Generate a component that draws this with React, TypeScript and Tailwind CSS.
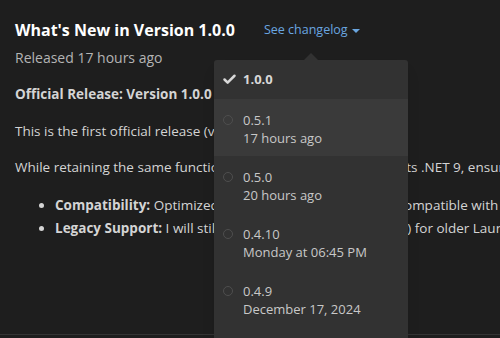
import { Check } from "lucide-react";

const versions = [
  { v: "0.5.1", when: "17 hours ago", hover: true },
  { v: "0.5.0", when: "20 hours ago" },
  { v: "0.4.10", when: "Monday at 06:45 PM" },
  { v: "0.4.9", when: "December 17, 2024" },
];

export default function App() {
  return (
    <div
      className="relative h-[338px] w-[500px] overflow-hidden bg-[#1e1e1e] text-[#d4d4d4]"
      style={{ fontFamily: '"Open Sans", "Noto Sans", sans-serif' }}
    >
      <div className="h-[335px] border-b border-[#343434] px-[15px] pt-[19px]">
        <div className="flex h-[22px] items-center">
          <h1 className="text-[16px] font-bold text-white">What's New in Version 1.0.0</h1>
          <button className="ml-[29px] flex items-center gap-[4px] text-[12.5px] text-[#6aa6e0]">
            See changelog
            <span className="mt-[1px] h-0 w-0 border-x-[4px] border-t-[4px] border-x-transparent border-t-[#6aa6e0]" />
          </button>
        </div>
        <p className="mt-[6px] text-[14px] text-[#b4b4b4]">Released 17 hours ago</p>
        <div className="mt-[15px] whitespace-nowrap text-[13.5px] leading-[23px]">
          <p className="font-bold">Official Release: Version 1.0.0</p>
          <p className="mt-[14px]">This is the first official release (version 1.0.0).</p>
          <p className="mt-[13px]">While retaining the same functionality,{"\u00a0\u00a0"} this version now targets .NET 9, ensuring better performance.</p>
          <ul className="mt-[15px] list-disc pl-[40px]">
            <li>
              <b>Compatibility:</b> Optimized for all modern systems and compatible with Windows 10 and 11.
            </li>
            <li>
              <b>Legacy Support:</b> I will still continue the old build{"\u00a0"} (v0.5.x) for older Launcher users.
            </li>
          </ul>
        </div>
      </div>

      <div className="absolute bottom-[-6px] left-[214px] top-[60px] w-[194px] rounded-[3px] bg-[#323232] text-[13px] text-[#c8c8c8] shadow-lg">
        <span className="absolute left-[90px] top-[-7px] h-0 w-0 border-x-[7px] border-b-[7px] border-x-transparent border-b-[#323232]" />
        <div className="flex h-[39px] items-center pl-[8px]">
          <Check className="h-[15px] w-[15px] text-[#d8d8d8]" strokeWidth={4} />
          <span className="ml-[6px] font-bold text-[#d8d8d8]">1.0.0</span>
        </div>
        {versions.map((item) => (
          <div
            key={item.v}
            className={`flex h-[57px] pl-[9px] pt-[12px] ${item.hover ? "bg-[#3a3a3a]" : ""}`}
          >
            <span className="mt-[4px] h-[10px] w-[10px] rounded-full border border-[#4e4e4e]" />
            <div className="ml-[10px] leading-[18px]">
              <div>{item.v}</div>
              <div>{item.when}</div>
            </div>
          </div>
        ))}
      </div>
    </div>
  );
}
